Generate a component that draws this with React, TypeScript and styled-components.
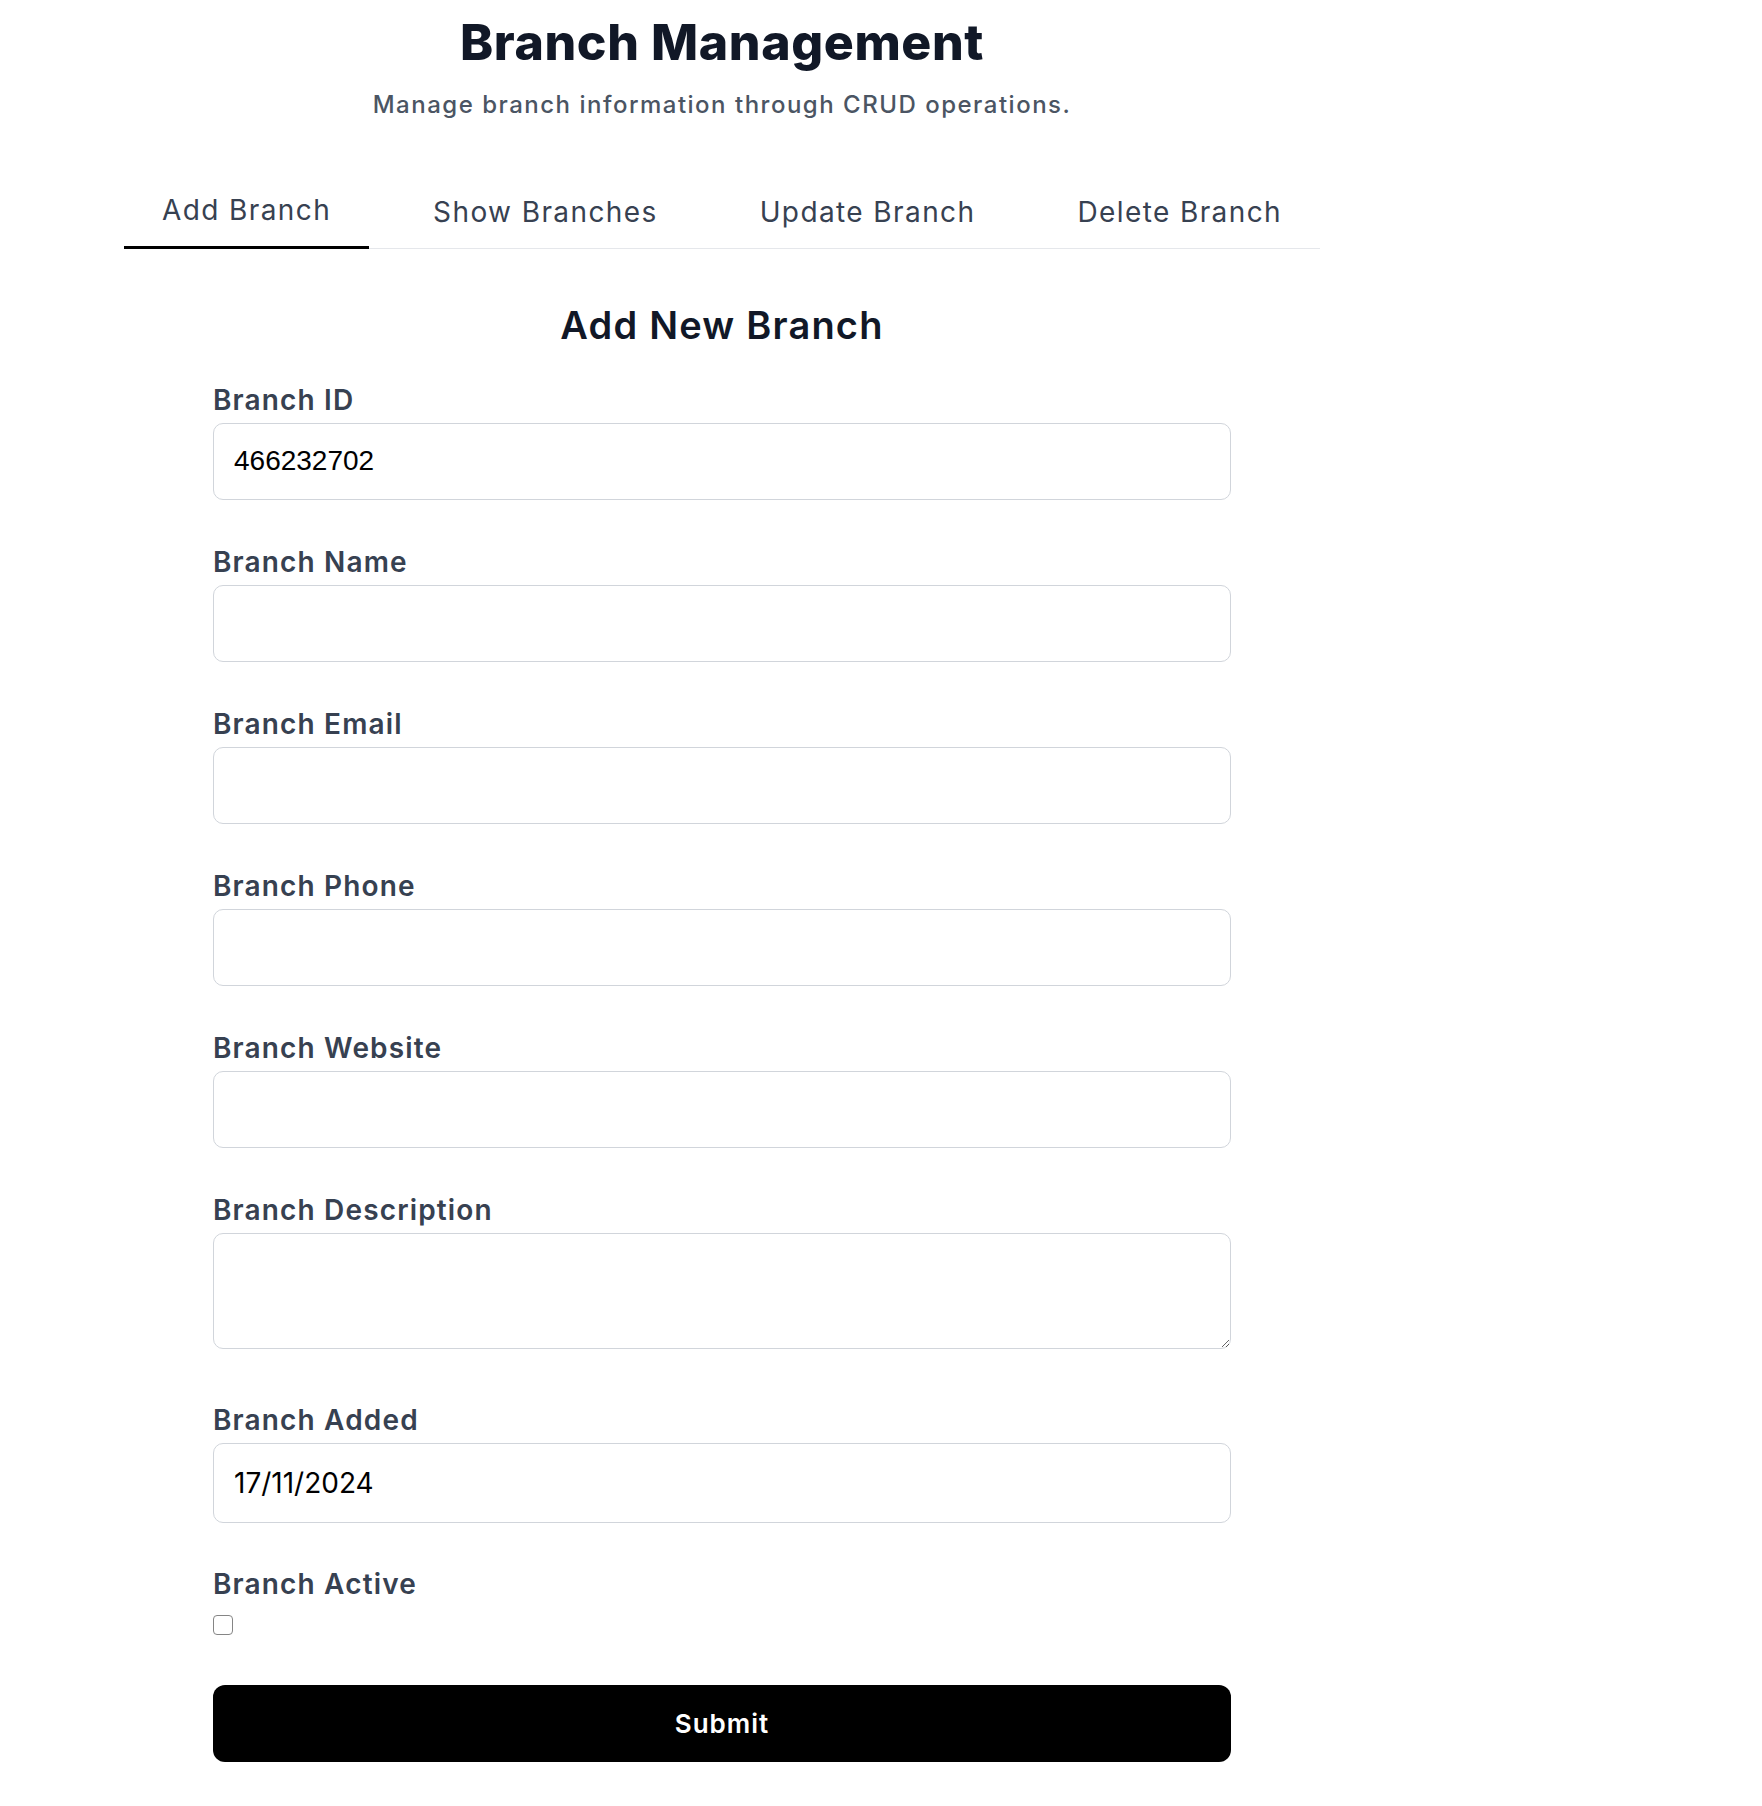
import React from "react";
import styled, { createGlobalStyle } from "styled-components";

const GlobalStyle = createGlobalStyle`
  html, body {
    margin: 0;
    padding: 0;
    background: #ffffff;
  }
  body {
    font-family: "Inter", "Open Sans", sans-serif;
    color: #111827;
  }
  * { box-sizing: border-box; }
`;

const Page = styled.div`
  width: 1196px;
  margin-left: 124px;
  padding-top: 14px;
  padding-bottom: 45px;
`;

const Header = styled.header`
  display: flex;
  flex-direction: column;
  align-items: center;
  gap: 15px;
`;

const Title = styled.h1`
  margin: 0;
  font-family: "Inter", sans-serif;
  font-size: 50px;
  line-height: 57.6px;
  font-weight: 800;
  letter-spacing: 0.6px;
  color: #111827;
`;

const Subtitle = styled.p`
  margin: 0;
  font-size: 24px;
  line-height: 36px;
  font-weight: 500;
  letter-spacing: 1.5px;
  color: #4b5563;
`;

const TabList = styled.nav`
  margin-top: 54px;
  display: flex;
  justify-content: space-between;
  border-bottom: 1px solid #e5e7eb;
`;

const Tab = styled.button<{ $active?: boolean }>`
  appearance: none;
  background: none;
  border: none;
  border-bottom: 3px solid ${(p) => (p.$active ? "#000000" : "transparent")};
  margin-bottom: -1px;
  padding: ${(p) => (p.$active ? "12px 38px 15px" : "14px 38px 13px")};
  font-family: "Inter", sans-serif;
  font-size: 28px;
  line-height: 42px;
  font-weight: 400;
  letter-spacing: 1.4px;
  color: #374151;
  cursor: pointer;
`;

const Form = styled.form`
  width: 1018px;
  margin: 53px auto 0;
  display: flex;
  flex-direction: column;
`;

const FormTitle = styled.h2`
  margin: 0 0 34px;
  text-align: center;
  font-size: 38px;
  line-height: 46px;
  font-weight: 600;
  letter-spacing: 1.2px;
  color: #111827;
`;

const Field = styled.div<{ $after?: number }>`
  display: flex;
  flex-direction: column;
  gap: 5px;
  margin-bottom: ${(p) => p.$after ?? 44}px;
`;

const Label = styled.label`
  font-size: 28px;
  line-height: 36px;
  font-weight: 600;
  letter-spacing: 1.15px;
  color: #374151;
`;

const Input = styled.input<{ $height?: number; $mono?: boolean }>`
  width: 100%;
  height: ${(p) => p.$height ?? 77}px;
  padding: 0 20px;
  border: 1px solid #d1d5db;
  border-radius: 10px;
  background: #ffffff;
  font-family: ${(p) => (p.$mono ? '"Liberation Sans", Arial, sans-serif' : '"Inter", sans-serif')};
  font-size: 28px;
  color: #000000;
  outline: none;
`;

const TextArea = styled.textarea`
  display: block;
  width: 100%;
  height: 116px;
  padding: 14px 20px;
  border: 1px solid #d1d5db;
  border-radius: 10px;
  font-family: "Inter", sans-serif;
  font-size: 28px;
  color: #000000;
  outline: none;
`;

const Checkbox = styled.input`
  appearance: none;
  margin: 0;
  width: 20px;
  height: 20px;
  border: 1.5px solid #858585;
  border-radius: 4px;
  background: #ffffff;
`;

const CheckField = styled.div`
  display: flex;
  flex-direction: column;
  align-items: flex-start;
  gap: 13px;
  margin-bottom: 50px;
`;

const SubmitButton = styled.button`
  width: 100%;
  height: 77px;
  border: none;
  border-radius: 12px;
  background: #000000;
  color: #ffffff;
  font-family: "Inter", sans-serif;
  font-size: 26px;
  font-weight: 600;
  letter-spacing: 1px;
  cursor: pointer;
`;

const tabs = ["Add Branch", "Show Branches", "Update Branch", "Delete Branch"];

const fields = [
  { id: "branchId", label: "Branch ID", value: "466232702" },
  { id: "branchName", label: "Branch Name", value: "" },
  { id: "branchEmail", label: "Branch Email", value: "" },
  { id: "branchPhone", label: "Branch Phone", value: "" },
  { id: "branchWebsite", label: "Branch Website", value: "" },
];

export default function App() {
  return (
    <>
      <GlobalStyle />
      <Page>
        <Header>
          <Title>Branch Management</Title>
          <Subtitle>Manage branch information through CRUD operations.</Subtitle>
        </Header>
        <TabList>
          {tabs.map((t, i) => (
            <Tab key={t} type="button" $active={i === 0}>
              {t}
            </Tab>
          ))}
        </TabList>
        <Form onSubmit={(e) => e.preventDefault()}>
          <FormTitle>Add New Branch</FormTitle>
          {fields.map((f) => (
            <Field key={f.id}>
              <Label htmlFor={f.id}>{f.label}</Label>
              <Input id={f.id} type="text" defaultValue={f.value} $mono />
            </Field>
          ))}
          <Field $after={53}>
            <Label htmlFor="branchDescription">Branch Description</Label>
            <TextArea id="branchDescription" />
          </Field>
          <Field $after={43}>
            <Label htmlFor="branchAdded">Branch Added</Label>
            <Input id="branchAdded" type="text" defaultValue="17/11/2024" $height={80} />
          </Field>
          <CheckField>
            <Label htmlFor="branchActive">Branch Active</Label>
            <Checkbox id="branchActive" type="checkbox" />
          </CheckField>
          <SubmitButton type="submit">Submit</SubmitButton>
        </Form>
      </Page>
    </>
  );
}
